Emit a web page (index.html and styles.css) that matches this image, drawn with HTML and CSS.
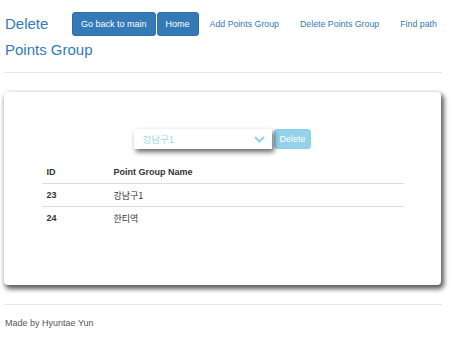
FILE: index.html
```html
<!DOCTYPE html>
<html lang="ko">
<head>
  <meta charset="UTF-8">
  <title>Delete Points Group</title>
  <link rel="stylesheet" href="styles.css">
</head>
<body>
  <div class="page">
    <header class="topbar">
      <h3 class="title">Delete<br>Points Group</h3>
      <nav class="nav">
        <a href="#" class="btn btn-primary">Go back to main</a>
        <a href="#" class="btn btn-primary">Home</a>
        <a href="#" class="nav-link">Add Points Group</a>
        <a href="#" class="nav-link">Delete Points Group</a>
        <a href="#" class="nav-link">Find path</a>
      </nav>
    </header>

    <hr>

    <div class="card">
      <form class="delete-form">
        <div class="select-wrap">
          <select class="group-select" disabled>
            <option>강남구1</option>
            <option>한티역</option>
          </select>
          <svg class="chevron" width="11" height="7" viewBox="0 0 11 7">
            <path d="M1 1 L5.5 5.5 L10 1" fill="none" stroke="#8fd0ea" stroke-width="2"/>
          </svg>
        </div>
        <button type="button" class="btn btn-info" disabled>Delete</button>
      </form>

      <table class="group-table">
        <thead>
          <tr>
            <th class="col-id">ID</th>
            <th>Point Group Name</th>
          </tr>
        </thead>
        <tbody>
          <tr>
            <td class="col-id">23</td>
            <td>강남구1</td>
          </tr>
          <tr>
            <td class="col-id">24</td>
            <td>한티역</td>
          </tr>
        </tbody>
      </table>
    </div>

    <hr class="footer-rule">
    <footer class="footer">Made by Hyuntae Yun</footer>
  </div>
</body>
</html>
```

FILE: styles.css
```css
body {
  margin: 0;
  font-family: "Liberation Sans", Arial, "Noto Sans CJK KR", sans-serif;
  font-size: 9px;
  color: #333;
  background: #fff;
}
.page {
  width: 438px;
  padding-left: 4px;
}
.topbar {
  display: flex;
  align-items: flex-start;
  height: 64px;
  padding-top: 12px;
  box-sizing: border-box;
}
.title {
  flex-shrink: 0;
  width: 67px;
  min-width: 0;
  margin: -1px 0 0 1px;
  font-size: 15px;
  font-weight: normal;
  line-height: 26px;
  white-space: nowrap;
  color: #337ab7;
}
.nav {
  display: flex;
  align-items: center;
  gap: 1px;
  white-space: nowrap;
}
.btn {
  display: inline-block;
  flex-shrink: 0;
  height: 24px;
  line-height: 22px;
  padding: 0 8px;
  border: 1px solid transparent;
  border-radius: 3px;
  font-family: inherit;
  font-size: 9px;
  text-decoration: none;
  white-space: nowrap;
  box-sizing: border-box;
}
.btn-primary {
  background: #337ab7;
  border-color: #2e6da4;
  color: #fff;
}
.nav-link {
  flex-shrink: 0;
  padding: 0 10px;
  font-size: 8.8px;
  line-height: 24px;
  color: #337ab7;
  text-decoration: none;
  white-space: nowrap;
}
hr {
  margin: 8px 0 0;
  border: 0;
  border-top: 1px solid #e6e6e6;
}
.card {
  margin-top: 19px;
  height: 193px;
  width: 437px;
  padding-top: 37px;
  box-sizing: border-box;
  border-radius: 4px;
  background: #fff;
  box-shadow: 2px 3px 5px 1px rgba(0, 0, 0, 0.65);
}
.delete-form {
  display: flex;
  justify-content: center;
  gap: 2px;
}
.select-wrap {
  position: relative;
}
.group-select {
  appearance: none;
  -webkit-appearance: none;
  width: 138px;
  height: 20px;
  padding: 0 0 0 8px;
  border: 0;
  border-radius: 0;
  background: #fff;
  font-family: "Noto Sans CJK KR", sans-serif;
  font-size: 9.5px;
  color: #9dd5ee;
  opacity: 1;
  box-shadow: 2px 3px 5px rgba(0, 0, 0, 0.6);
}
.chevron {
  position: absolute;
  right: 7px;
  top: 7px;
}
.btn-info {
  height: 20px;
  line-height: 18px;
  padding: 0 4px;
  background: #92d3ea;
  border-color: #8ccfe7;
  color: #fff;
}
.group-table {
  width: 362px;
  margin: 12px auto 0;
  border-collapse: collapse;
}
.group-table th,
.group-table td {
  height: 22px;
  padding: 0 5px;
  text-align: left;
  font-size: 9px;
  border-bottom: 1px solid #ddd;
}
.group-table th {
  font-weight: bold;
  color: #333;
}
.group-table tbody tr:last-child td {
  border-bottom: 0;
}
.group-table td {
  font-family: "Noto Sans CJK KR", sans-serif;
}
.group-table .col-id {
  width: 57px;
  font-family: "Liberation Sans", Arial, sans-serif;
  font-weight: bold;
}
.footer-rule {
  margin-top: 19px;
}
.footer {
  padding: 13px 0 0 1px;
  color: #555;
  font-size: 9px;
}
```
